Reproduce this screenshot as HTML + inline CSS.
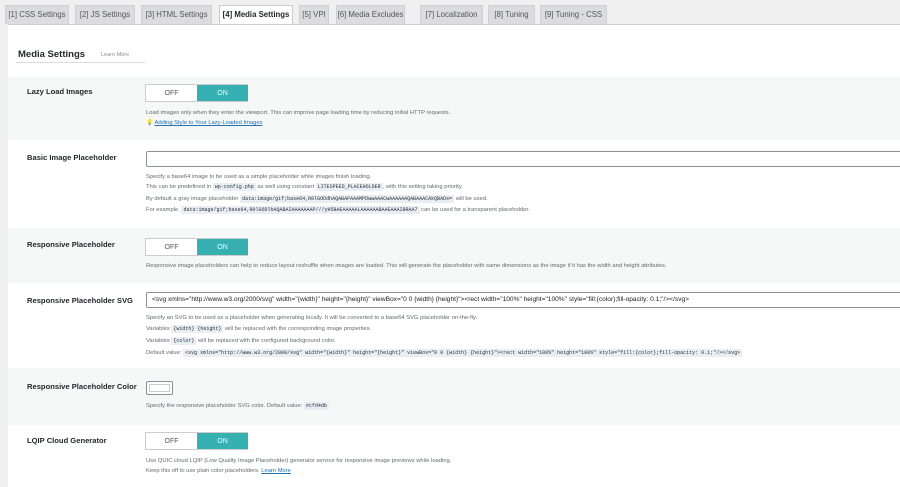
<!DOCTYPE html>
<html><head><meta charset="utf-8"><style>
*{margin:0;padding:0;box-sizing:border-box}
body{width:900px;height:487px;overflow:hidden;background:#f0f0f1;font-family:"Liberation Sans",sans-serif;position:relative;color:#3c434a}
.a{position:absolute;white-space:nowrap}
.tab{position:absolute;top:5px;height:19px;background:#dcdcde;border:1px solid #d0d0d3;border-bottom:none;font-size:7.8px;color:#50575e;line-height:18px;text-align:center;white-space:nowrap}
.tab.on{background:#fff;color:#1d2327;font-weight:bold;height:20px;border-color:#ccc}
.panel{position:absolute;left:8px;top:24px;width:892px;height:463px;background:#fff;border-top:1px solid #ccc}
.row{position:absolute;left:8px;width:892px}
.g{background:#f6f7f7}
.lbl{position:absolute;left:27px;font-size:7.6px;font-weight:600;color:#23282d}
.d{position:absolute;left:146px;font-size:5.8px;color:#646970;white-space:nowrap}
.c{background:#e8eef3;font-family:"Liberation Mono",monospace;font-size:5px;padding:1px 2px;color:#2c3338}
.tg{position:absolute;left:145px;width:103px;height:18px;border:1px solid #ccc;background:#fff;font-size:7px}
.tg span{position:absolute;top:0;height:16px;line-height:17px;text-align:center;width:51px}
.tg .off{left:0;color:#555}
.tg .onn{left:51px;background:#36b0b0;color:#e8ffff}
.inp{position:absolute;left:146px;width:760px;height:16px;border:1px solid #8c8f94;background:#fff;border-radius:2px;font-size:7px;line-height:14px;padding-left:5px;color:#222}
a{color:#2271b1}
</style></head><body>
<div class="tab" style="left:5px;width:64px">[1] CSS Settings</div>
<div class="tab" style="left:75px;width:60px">[2] JS Settings</div>
<div class="tab" style="left:141px;width:71px">[3] HTML Settings</div>
<div class="tab on" style="left:219px;width:74px">[4] Media Settings</div>
<div class="tab" style="left:299px;width:30px">[5] VPI</div>
<div class="tab" style="left:336px;width:69px">[6] Media Excludes</div>
<div class="tab" style="left:420px;width:63px">[7] Localization</div>
<div class="tab" style="left:488px;width:47px">[8] Tuning</div>
<div class="tab" style="left:540px;width:67px">[9] Tuning - CSS</div>
<div class="panel"></div>
<div class="a" style="left:18px;top:49px;font-size:9.5px;font-weight:bold;color:#23282d">Media Settings</div>
<div class="a" style="left:101px;top:52px;font-size:5.5px;color:#8c8f94">Learn More</div>
<div class="a" style="left:16px;top:62px;width:129px;height:1px;background:#dcdcde"></div>

<div class="row g" style="top:77px;height:63px"></div>
<div class="lbl" style="top:87px">Lazy Load Images</div>
<div class="tg" style="top:84px"><span class="off">OFF</span><span class="onn">ON</span></div>
<div class="d" style="top:110px">Load images only when they enter the viewport. This can improve page loading time by reducing initial HTTP requests.</div>
<div class="d" style="top:120px"><span style="color:#dba617">💡</span> <a style="text-decoration:underline">Adding Style to Your Lazy-Loaded Images</a></div>

<div class="lbl" style="top:153px">Basic Image Placeholder</div>
<div class="inp" style="top:151px"></div>
<div class="d" style="top:174px">Specify a base64 image to be used as a simple placeholder while images finish loading.</div>
<div class="d" style="top:184px">This can be predefined in <span class="c">wp-config.php</span> as well using constant <span class="c">LITESPEED_PLACEHOLDER</span>, with this setting taking priority.</div>
<div class="d" style="top:196px">By default a gray image placeholder <span class="c">data:image/gif;base64,R0lGODdhAQABAPAAAMPDwwAAACwAAAAAAQABAAACAkQBADs=</span> will be used.</div>
<div class="d" style="top:207px">For example, <span class="c">data:image/gif;base64,R0lGODlhAQABAIAAAAAAAP///yH5BAEAAAAALAAAAAABAAEAAAIBRAA7</span> can be used for a transparent placeholder.</div>

<div class="row g" style="top:228px;height:55px"></div>
<div class="lbl" style="top:240px">Responsive Placeholder</div>
<div class="tg" style="top:238px"><span class="off">OFF</span><span class="onn">ON</span></div>
<div class="d" style="top:263px">Responsive image placeholders can help to reduce layout reshuffle when images are loaded. This will generate the placeholder with same dimensions as the image if it has the width and height attributes.</div>

<div class="lbl" style="top:296px">Responsive Placeholder SVG</div>
<div class="inp" style="top:292px;font-size:6.6px">&lt;svg xmlns="http://www.w3.org/2000/svg" width="{width}" height="{height}" viewBox="0 0 {width} {height}"&gt;&lt;rect width="100%" height="100%" style="fill:{color};fill-opacity: 0.1;"/&gt;&lt;/svg&gt;</div>
<div class="d" style="top:315px">Specify an SVG to be used as a placeholder when generating locally. It will be converted to a base64 SVG placeholder on-the-fly.</div>
<div class="d" style="top:326px">Variables <span class="c">{width} {height}</span> will be replaced with the corresponding image properties.</div>
<div class="d" style="top:338px">Variables <span class="c">{color}</span> will be replaced with the configured background color.</div>
<div class="d" style="top:350px">Default value: <span class="c">&lt;svg xmlns="http://www.w3.org/2000/svg" width="{width}" height="{height}" viewBox="0 0 {width} {height}"&gt;&lt;rect width="100%" height="100%" style="fill:{color};fill-opacity: 0.1;"/&gt;&lt;/svg&gt;</span></div>

<div class="row g" style="top:368px;height:57px"></div>
<div class="lbl" style="top:382px">Responsive Placeholder Color</div>
<div class="a" style="left:146px;top:381px;width:27px;height:14px;border:1px solid #8c8f94;background:#fff;border-radius:2px;box-shadow:inset 0 0 0 2px #fff,inset 0 0 0 3px #ccc"></div>
<div class="d" style="top:403px">Specify the responsive placeholder SVG color. Default value: <span class="c">#cfd4db</span></div>

<div class="lbl" style="top:436px">LQIP Cloud Generator</div>
<div class="tg" style="top:432px"><span class="off">OFF</span><span class="onn">ON</span></div>
<div class="d" style="top:458px">Use QUIC.cloud LQIP (Low Quality Image Placeholder) generator service for responsive image previews while loading.</div>
<div class="d" style="top:468px">Keep this off to use plain color placeholders. <a style="text-decoration:underline">Learn More</a></div>
</body></html>
